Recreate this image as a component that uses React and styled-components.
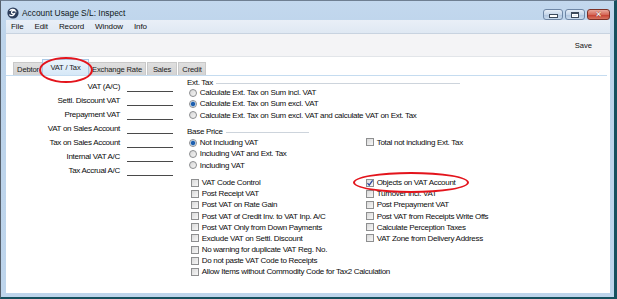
import React from "react";
import styled, { createGlobalStyle } from "styled-components";

const Global = createGlobalStyle`
  html, body {
    margin: 0;
    padding: 0;
    background: #fff;
  }
  body {
    font-family: "Liberation Sans", Arial, sans-serif;
    color: #0c0c0c;
  }
`;

const extTax = [
  { text: "Calculate Ext. Tax on Sum incl. VAT", on: false },
  { text: "Calculate Ext. Tax on Sum excl. VAT", on: true },
  { text: "Calculate Ext. Tax on Sum excl. VAT and calculate VAT on Ext. Tax", on: false },
];

const basePrice = [
  { text: "Not Including VAT", on: true },
  { text: "Including VAT and Ext. Tax", on: false },
  { text: "Including VAT", on: false },
];

const leftChecks = [
  "VAT Code Control",
  "Post Receipt VAT",
  "Post VAT on Rate Gain",
  "Post VAT of Credit Inv. to VAT Inp. A/C",
  "Post VAT Only from Down Payments",
  "Exclude VAT on Settl. Discount",
  "No warning for duplicate VAT Reg. No.",
  "Do not paste VAT Code to Receipts",
  "Allow Items without Commodity Code for Tax2 Calculation",
];

const rightChecks = [
  { text: "Objects on VAT Account", on: true },
  { text: "Turnover Incl. VAT", on: false },
  { text: "Post Prepayment VAT", on: false },
  { text: "Post VAT from Receipts Write Offs", on: false },
  { text: "Calculate Perception Taxes", on: false },
  { text: "VAT Zone from Delivery Address", on: false },
];

const fields = [
  "VAT (A/C)",
  "Settl. Discount VAT",
  "Prepayment VAT",
  "VAT on Sales Account",
  "Tax on Sales Account",
  "Internal VAT A/C",
  "Tax Accrual A/C",
];

const tabs = [
  { text: "Debtor", w: 30 },
  { text: "VAT / Tax", w: 47, active: true },
  { text: "Exchange Rate", w: 58 },
  { text: "Sales", w: 30 },
  { text: "Credit", w: 28 },
];

const Radio = ({ checked }) => <RadioDot $checked={checked} />;

const Check = ({ checked }) => (
  <CheckBox>
    {checked && (
      <svg width="8" height="8" viewBox="0 0 8 8">
        <path d="M1.5 4.2 L3.2 6.2 L6.6 1.3" fill="none" stroke="#2846a0" strokeWidth="1.2" />
      </svg>
    )}
  </CheckBox>
);

const AppIcon = () => (
  <svg width="12" height="12" viewBox="0 0 12 12">
    <circle cx="6" cy="6" r="5.6" fill="#2b3c5a" />
    <path d="M3 3.4 C4.6 2 7.6 2.2 8.4 4 C6.8 3.2 5 3.6 4.6 5 C4.2 6.6 6 7.4 7.6 6.6 C7 8.6 4.4 9.4 2.8 8" fill="none" stroke="#fff" strokeWidth="1.3" strokeLinecap="round" />
  </svg>
);

const App = () => {
  return (
    <>
      <Global />
      <Window>
        <TitleBar>
          <AppIcon />
          <Title>Account Usage S/L: Inspect</Title>
          <WinButtons>
            <WinButton>
              <MinGlyph />
            </WinButton>
            <WinButton>
              <MaxGlyph />
            </WinButton>
            <WinButton $close>
              <CloseGlyph>✕</CloseGlyph>
            </WinButton>
          </WinButtons>
        </TitleBar>
        <Client>
          <MenuBar>
            <MenuItem>File</MenuItem>
            <MenuItem>Edit</MenuItem>
            <MenuItem>Record</MenuItem>
            <MenuItem>Window</MenuItem>
            <MenuItem>Info</MenuItem>
          </MenuBar>
          <Toolbar>
            <ToolButton>Save</ToolButton>
          </Toolbar>
          <Content>
            <TabStrip>
              {tabs.map((t) => (
                <Tab key={t.text} $w={t.w} $active={t.active}>
                  {t.text}
                </Tab>
              ))}
            </TabStrip>
            <Form>
              <FieldCol>
                {fields.map((f) => (
                  <FieldRow key={f}>
                    <FieldLabel>{f}</FieldLabel>
                    <FieldInput />
                  </FieldRow>
                ))}
              </FieldCol>
              <Options>
                <SectionHeader $w={273}>
                  <span>Ext. Tax</span>
                  <Rule />
                </SectionHeader>
                {extTax.map((o) => (
                  <OptionRow key={o.text}>
                    <Radio checked={o.on} />
                    <OptionText>{o.text}</OptionText>
                  </OptionRow>
                ))}
                <SectionHeader $w={122} $gap>
                  <span>Base Price</span>
                  <Rule />
                </SectionHeader>
                <Split>
                  <div>
                    {basePrice.map((o) => (
                      <OptionRow key={o.text}>
                        <Radio checked={o.on} />
                        <OptionText>{o.text}</OptionText>
                      </OptionRow>
                    ))}
                  </div>
                  <div>
                    <OptionRow $box>
                      <Check />
                      <OptionText $box>Total not including Ext. Tax</OptionText>
                    </OptionRow>
                  </div>
                </Split>
                <Split $checks>
                  <div>
                    {leftChecks.map((c) => (
                      <OptionRow key={c} $box>
                        <Check />
                        <OptionText $box>{c}</OptionText>
                      </OptionRow>
                    ))}
                  </div>
                  <div>
                    {rightChecks.map((c) => (
                      <OptionRow key={c.text} $box>
                        <Check checked={c.on} />
                        <OptionText $box>{c.text}</OptionText>
                      </OptionRow>
                    ))}
                  </div>
                </Split>
              </Options>
            </Form>
          </Content>
        </Client>
        <Ring $x={39} $y={57} $w={54} $h={26} />
        <Ring $x={353} $y={172} $w={116} $h={21} />
      </Window>
    </>
  );
};

const Window = styled.div`
  position: relative;
  box-sizing: border-box;
  width: 617px;
  height: 299px;
  display: flex;
  flex-direction: column;
  background: linear-gradient(#c3d8ee, #bcd3ea 40px, #bed5ec);
  border-top: 1px solid #6f7f92;
  border-left: 1px solid #56606c;
  border-right: 3px solid #16505e;
  border-bottom: 2px solid #16505e;
  overflow: hidden;
`;

const TitleBar = styled.div`
  height: 19px;
  display: flex;
  align-items: center;
  padding: 0 4px 0 6px;
  gap: 3px;
  svg {
    margin-top: 4px;
  }
`;

const Title = styled.div`
  font-family: "Liberation Sans", Arial, sans-serif;
  font-size: 8.4px;
  color: #101820;
  margin-top: 5px;
`;

const WinButtons = styled.div`
  margin-left: auto;
  display: flex;
  gap: 2px;
  align-self: flex-end;
`;

const WinButton = styled.div`
  box-sizing: border-box;
  width: ${(p) => (p.$close ? 23 : 20)}px;
  height: 11px;
  display: flex;
  align-items: center;
  justify-content: center;
  border: 1px solid ${(p) => (p.$close ? "#7d3228" : "#6f87a6")};
  border-radius: 3px;
  background: ${(p) =>
    p.$close
      ? "linear-gradient(#e9a89a, #d66a5a 50%, #c33a2c 50%, #d8745f)"
      : "linear-gradient(#e6eef8, #c7d7ea 50%, #adc3dd 50%, #c9dbee)"};
`;

const MinGlyph = styled.div`
  width: 7px;
  height: 2px;
  margin-top: 3px;
  background: #fff;
  border: 1px solid #3c4a5c;
`;

const MaxGlyph = styled.div`
  width: 6px;
  height: 3px;
  border: 1px solid #3c4a5c;
  border-top-width: 2px;
  background: #dfe8f2;
  box-shadow: 0 0 0 1px #fff inset;
`;

const CloseGlyph = styled.span`
  color: #fff;
  font-size: 8px;
  font-weight: bold;
  line-height: 8px;
  font-family: "DejaVu Sans", sans-serif;
  text-shadow: 0 0 1px #5a1a10;
`;

const Client = styled.div`
  flex: 1;
  display: flex;
  flex-direction: column;
  margin: 0 4px 4px 5px;
  background: #fff;
  min-height: 0;
`;

const MenuBar = styled.div`
  height: 13px;
  display: flex;
  align-items: center;
  padding-left: 0;
  background: linear-gradient(#e9eff7, #dfe8f3);
  border-bottom: 1px solid #c8d3e0;
`;

const MenuItem = styled.div`
  font-size: 8px;
  letter-spacing: -0.1px;
  color: #111;
  padding: 0 5px;
  margin-right: 1px;
`;

const Toolbar = styled.div`
  height: 22px;
  display: flex;
  align-items: center;
  justify-content: flex-end;
  padding-right: 18px;
  background: #f4f4f6;
  border-bottom: 1px solid #e2e5e9;
`;

const ToolButton = styled.div`
  font-size: 7.6px;
  color: #111;
`;

const Content = styled.div`
  flex: 1;
  display: flex;
  flex-direction: column;
  background: #fff;
`;

const TabStrip = styled.div`
  height: 18px;
  display: flex;
  align-items: flex-end;
  padding-left: 7px;
  margin-right: 3px;
  border-bottom: 1px solid #c5dcf0;
`;

const Tab = styled.div`
  box-sizing: border-box;
  width: ${(p) => p.$w}px;
  height: ${(p) => (p.$active ? 16 : 13)}px;
  margin-left: ${(p) => (p.$active ? -2 : 0)}px;
  margin-right: ${(p) => (p.$active ? -1 : 1)}px;
  display: flex;
  align-items: center;
  justify-content: center;
  font-size: 7.6px;
  letter-spacing: -0.15px;
  color: #1b1b1b;
  white-space: nowrap;
  overflow: hidden;
  position: relative;
  z-index: ${(p) => (p.$active ? 1 : 0)};
  background: ${(p) => (p.$active ? "linear-gradient(#eaf3fb, #d6e8f7)" : "linear-gradient(#dfdfdf, #d3d3d3)")};
  border: 1px solid ${(p) => (p.$active ? "#a9c8e6" : "#c9c9c9")};
  border-bottom: none;
`;

const Form = styled.div`
  display: flex;
  padding: 1px 0 0 7px;
  gap: 14px;
`;

const FieldCol = styled.div`
  display: flex;
  flex-direction: column;
  margin-top: 2px;
`;

const FieldRow = styled.div`
  height: 14px;
  display: flex;
  align-items: center;
  gap: 7px;
`;

const FieldLabel = styled.div`
  width: 107px;
  text-align: right;
  font-size: 8px;
  letter-spacing: -0.3px;
  white-space: nowrap;
`;

const FieldInput = styled.div`
  width: 46px;
  height: 10px;
  border-bottom: 1px solid #4a4a4a;
`;

const Options = styled.div`
  display: flex;
  flex-direction: column;
  width: 420px;
`;

const SectionHeader = styled.div`
  width: ${(p) => p.$w}px;
  height: 10px;
  margin-top: ${(p) => (p.$gap ? 6 : 0)}px;
  display: flex;
  align-items: center;
  gap: 3px;
  font-size: 8px;
  letter-spacing: -0.3px;
  white-space: nowrap;
`;

const Rule = styled.div`
  flex: 1;
  height: 1px;
  margin-top: 2px;
  background: #cdd4dc;
`;

const Split = styled.div`
  display: grid;
  grid-template-columns: 175px 1fr;
  margin-top: ${(p) => (p.$checks ? 6.3 : 0)}px;
`;

const OptionRow = styled.div`
  height: ${(p) => (p.$box ? 11.16 : 11.3)}px;
  display: flex;
  align-items: center;
  padding-left: ${(p) => (p.$box ? 3.7 : 2.3)}px;
  white-space: nowrap;
`;

const OptionText = styled.span`
  font-size: 8px;
  letter-spacing: -0.3px;
  margin-left: ${(p) => (p.$box ? 3 : 2.5)}px;
`;

const RadioDot = styled.span`
  box-sizing: border-box;
  width: 8px;
  height: 8px;
  border-radius: 50%;
  border: 1px solid #8b8d8f;
  background: ${(p) =>
    p.$checked
      ? "radial-gradient(circle, #1f5fae 0 1.6px, #6aa0d8 2.2px, #e8eef4 2.8px)"
      : "linear-gradient(135deg, #d6d6d6, #f6f6f6)"};
  flex-shrink: 0;
`;

const CheckBox = styled.span`
  box-sizing: border-box;
  width: 8px;
  height: 8px;
  border: 1px solid #8e8f90;
  background: linear-gradient(135deg, #d9d9d9, #f7f7f7);
  display: flex;
  align-items: center;
  justify-content: center;
  flex-shrink: 0;
  svg {
    margin: -1px;
  }
`;

const Ring = styled.div`
  position: absolute;
  left: ${(p) => p.$x - 1}px;
  top: ${(p) => p.$y - 1}px;
  width: ${(p) => p.$w}px;
  height: ${(p) => p.$h}px;
  box-sizing: border-box;
  border: 2px solid #e3141c;
  border-radius: 50%;
  pointer-events: none;
  z-index: 5;
`;

export default App;
